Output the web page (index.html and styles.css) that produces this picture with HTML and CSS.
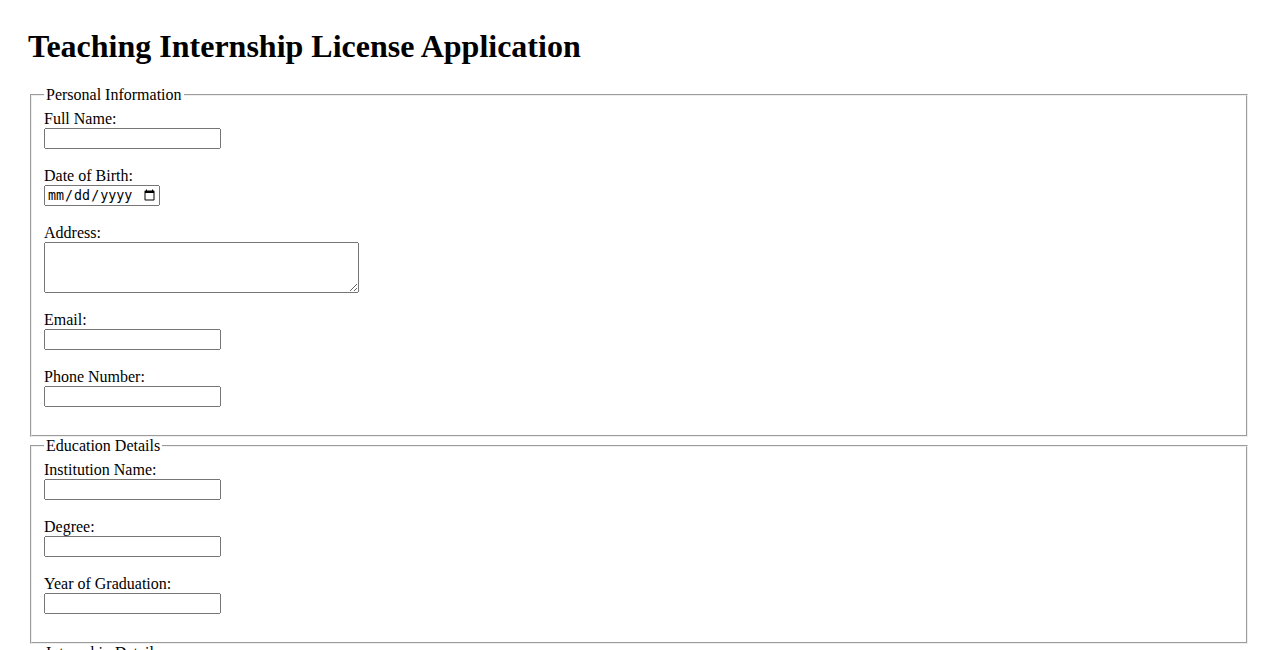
FILE: index.html
```html
<!DOCTYPE html>
<html lang="en">
<head>
<meta charset="utf-8">
<title>Teaching Internship License Application</title>
<link rel="stylesheet" href="styles.css">
</head>
<body class="page">
<h1 class="title">Teaching Internship License Application</h1>
<form class="app-form">
  <fieldset class="section">
    <legend class="section-legend">Personal Information</legend>
    <label class="field-label" for="fullName">Full Name:</label><br>
    <input class="text-input" type="text" id="fullName" name="fullName"><br><br>
    <label class="field-label" for="dob">Date of Birth:</label><br>
    <input class="date-input" type="date" id="dob" name="dob"><br><br>
    <label class="field-label" for="address">Address:</label><br>
    <textarea class="area-input" id="address" name="address" rows="3" cols="40"></textarea><br><br>
    <label class="field-label" for="email">Email:</label><br>
    <input class="text-input" type="email" id="email" name="email"><br><br>
    <label class="field-label" for="phone">Phone Number:</label><br>
    <input class="text-input" type="tel" id="phone" name="phone"><br><br>
  </fieldset>
  <fieldset class="section">
    <legend class="section-legend">Education Details</legend>
    <label class="field-label" for="institution">Institution Name:</label><br>
    <input class="text-input" type="text" id="institution" name="institution"><br><br>
    <label class="field-label" for="degree">Degree:</label><br>
    <input class="text-input" type="text" id="degree" name="degree"><br><br>
    <label class="field-label" for="gradYear">Year of Graduation:</label><br>
    <input class="text-input" type="text" id="gradYear" name="gradYear"><br><br>
  </fieldset>
  <fieldset class="section">
    <legend class="section-legend">Internship Details</legend>
    <label class="field-label" for="school">School Name:</label><br>
    <input class="text-input" type="text" id="school" name="school"><br><br>
    <label class="field-label" for="startDate">Start Date:</label><br>
    <input class="date-input" type="date" id="startDate" name="startDate"><br><br>
  </fieldset>
  <input class="submit-btn" type="submit" value="Submit Application">
</form>
</body>
</html>
```
FILE: styles.css
```css
.page {
  margin: 28px;
  font-family: "Liberation Serif", "Times New Roman", serif;
  font-size: 16px;
  color: #000;
  background: #fff;
}
.title {
  font-size: 32px;
  font-weight: bold;
  margin: 0 0 21.44px;
}
.section {
  margin: 0 2px;
  padding: 0.35em 0.75em 0.625em;
}
.section-legend {
  padding: 0 2px;
}
.text-input {
  box-sizing: border-box;
  width: 177px;
}
.date-input {
  box-sizing: border-box;
  width: 116px;
}
.area-input {
  box-sizing: border-box;
  width: 315px;
  height: 51px;
  vertical-align: top;
}
```
